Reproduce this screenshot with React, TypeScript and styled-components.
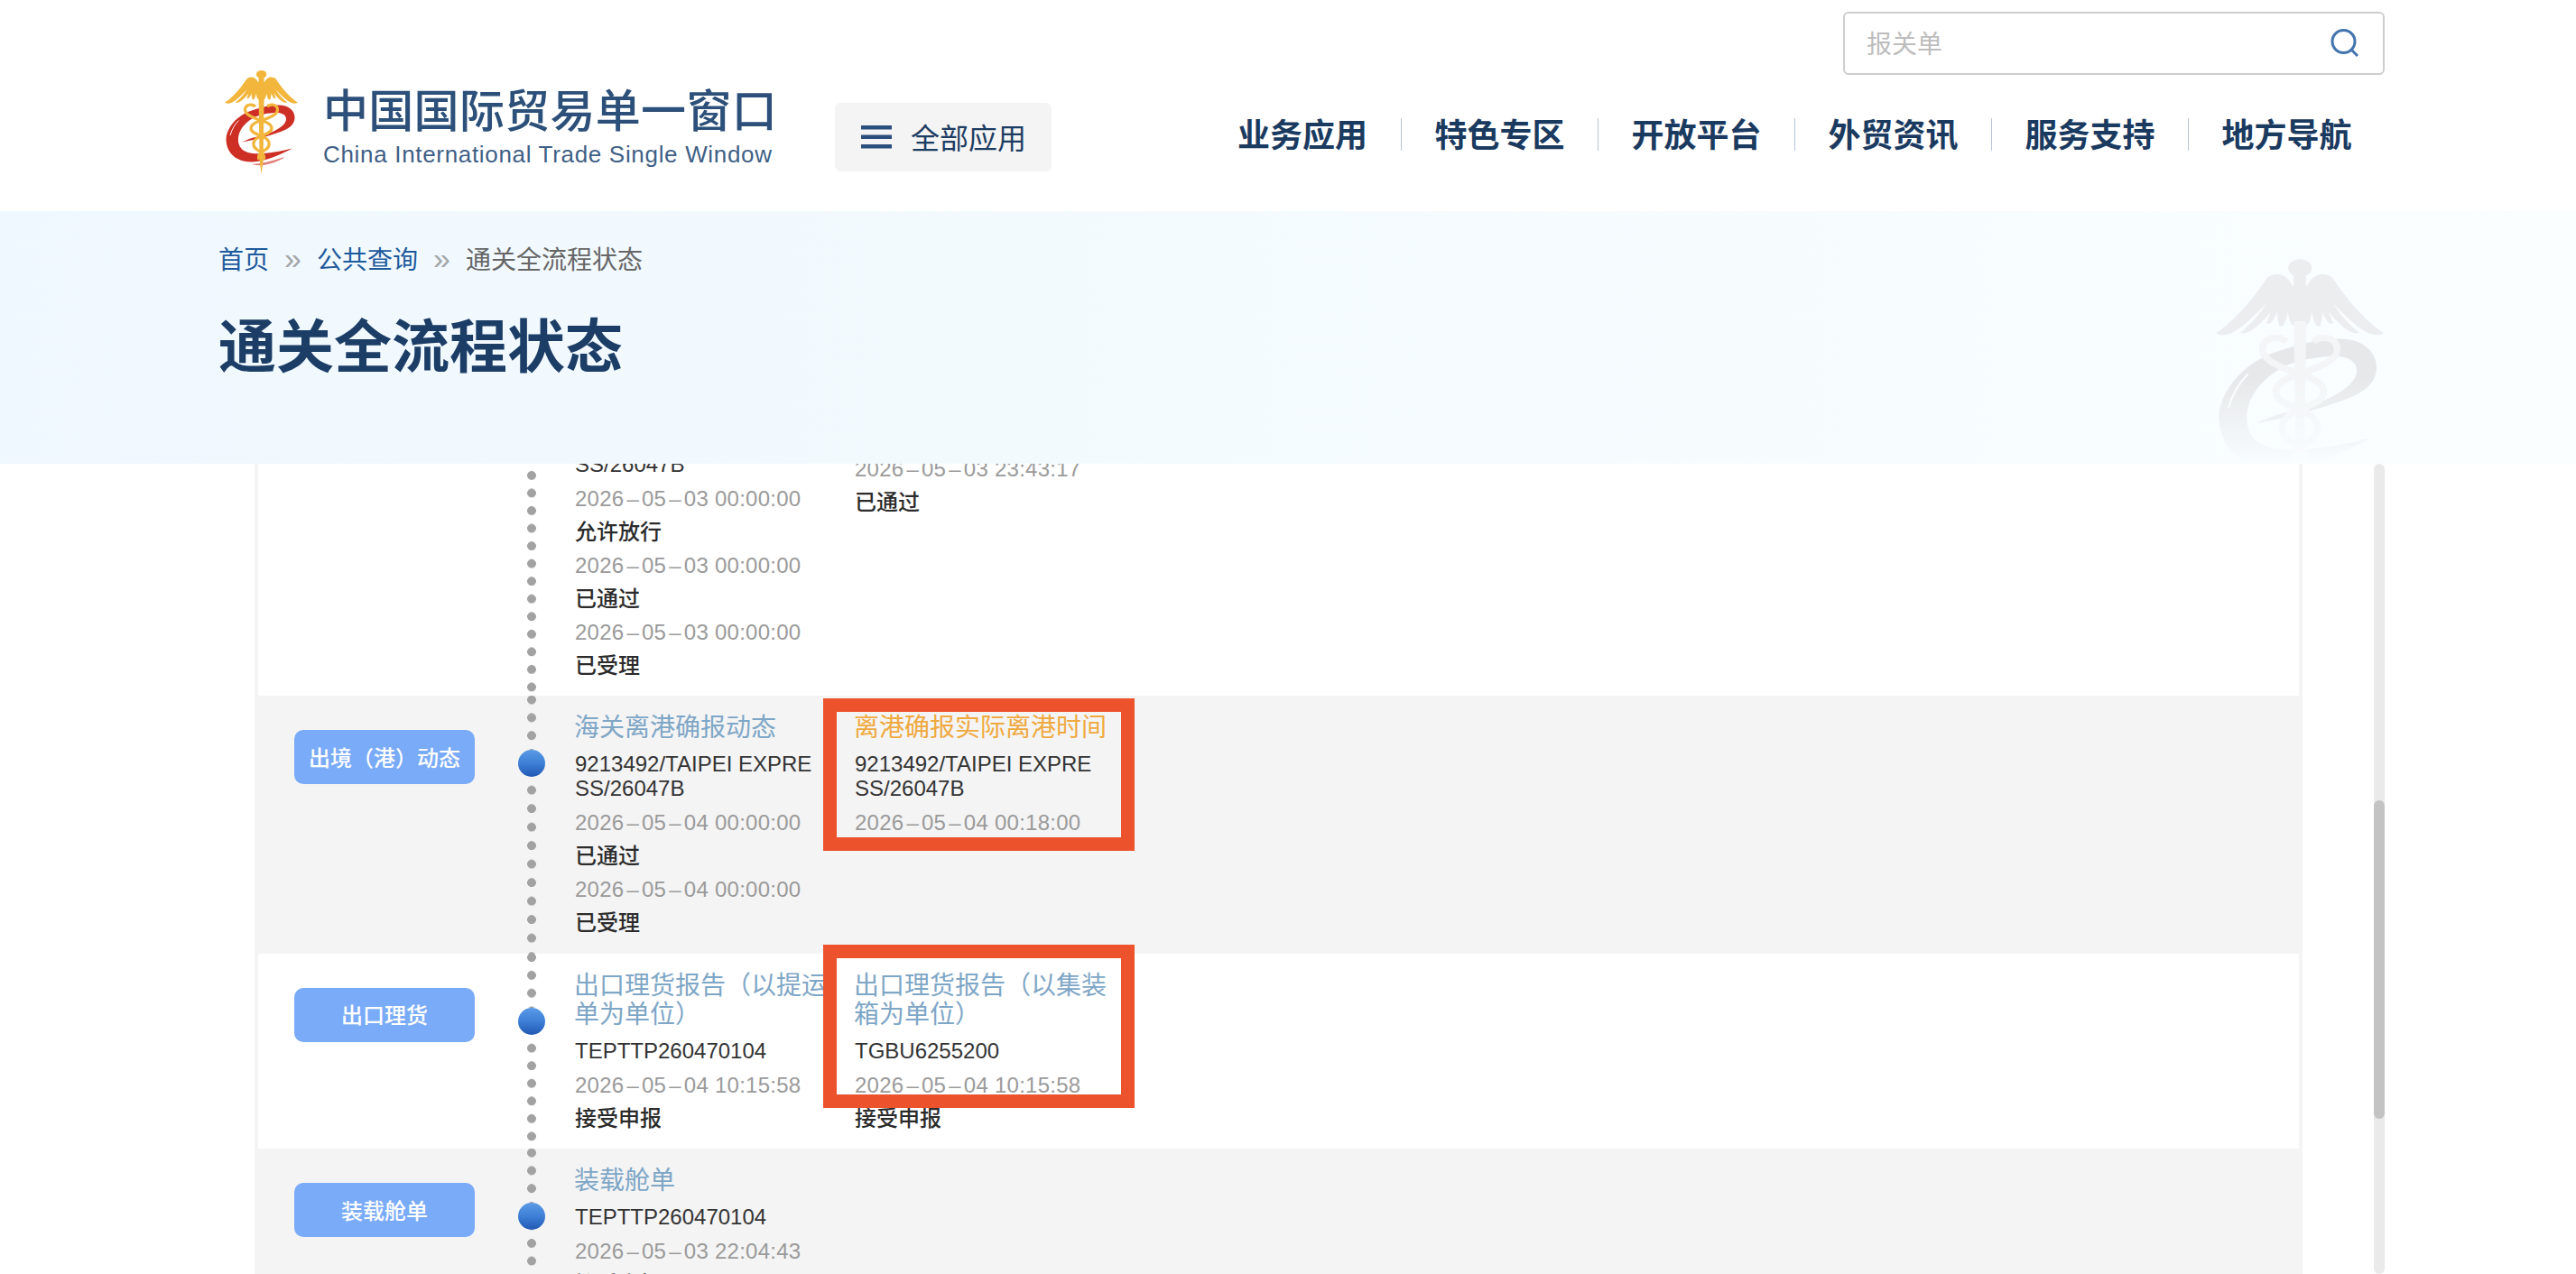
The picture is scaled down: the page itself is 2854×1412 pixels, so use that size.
import React from "react";
import styled, { createGlobalStyle } from "styled-components";

const CJK = `"Noto Sans CJK SC", sans-serif`;
const LATIN = `"Liberation Sans", "Noto Sans CJK SC", sans-serif`;

const Global = createGlobalStyle`
  html, body { margin: 0; padding: 0; background: #fff; overflow: hidden; }
  #root { width: 2854px; height: 1412px; overflow: hidden; }
  * { box-sizing: border-box; }
`;

const Page = styled.div`
  width: 2854px;
  height: 1412px;
  display: flex;
  flex-direction: column;
  font-family: ${LATIN};
`;

const Header = styled.header`
  height: 234px;
  flex: none;
  display: flex;
  align-items: flex-start;
  padding: 0 212px 0 249px;
  background: #fff;
`;

const Brand = styled.div`
  display: flex;
  align-items: flex-start;
  gap: 28px;
  margin-top: 78px;
`;

const BrandMark = styled.div`
  width: 81px;
  flex: none;
`;

const BrandText = styled.div`
  display: flex;
  flex-direction: column;
  margin-top: 10px;
`;

const BrandCn = styled.div`
  font-family: ${CJK};
  font-size: 50px;
  font-weight: 500;
  line-height: 62px;
  letter-spacing: 0.3px;
  color: #2c5079;
  white-space: nowrap;
`;

const BrandEn = styled.div`
  font-family: "Liberation Sans", sans-serif;
  font-size: 26px;
  line-height: 30px;
  margin-top: 6px;
  letter-spacing: 0.68px;
  color: #3f5f86;
  white-space: nowrap;
`;

const AllApps = styled.div`
  width: 240px;
  height: 76px;
  margin: 114px 0 0 64px;
  padding-left: 29px;
  display: flex;
  align-items: center;
  gap: 21px;
  background: #f4f4f4;
  border-radius: 6px;
  font-family: ${CJK};
  font-size: 32px;
  color: #1d3c62;
`;

const AppsLabel = styled.span`
  padding-bottom: 2px;
`;

const HeaderRight = styled.div`
  margin-left: auto;
  display: flex;
  flex-direction: column;
  align-items: flex-end;
`;

const SearchBox = styled.div`
  width: 600px;
  height: 70px;
  margin-top: 13px;
  padding: 0 26px 0 22px;
  display: flex;
  align-items: center;
  border: 2px solid #cdcdcd;
  border-radius: 6px;
  background: #fff;
`;

const SearchInput = styled.input`
  flex: 1;
  min-width: 0;
  border: 0;
  outline: 0;
  padding: 0 0 3px 2px;
  background: transparent;
  font-family: ${CJK};
  font-size: 28px;
  color: #333;
  &::placeholder { color: #bdbdbd; opacity: 1; }
`;

const Nav = styled.nav`
  display: flex;
  margin-top: 48px;
`;

const NavItem = styled.a`
  width: 218px;
  height: 36px;
  padding-bottom: 4px;
  display: flex;
  align-items: center;
  justify-content: center;
  font-family: ${CJK};
  font-size: 36px;
  font-weight: 600;
  color: #1b3a60;
  white-space: nowrap;
  & + & { border-left: 1px solid #b7c4d2; }
`;

const Banner = styled.section`
  height: 280px;
  flex: none;
  display: flex;
  justify-content: space-between;
  align-items: flex-start;
  padding: 0 213px 0 242px;
  overflow: hidden;
  background: linear-gradient(90deg, #eff8fe 0%, #f3fafe 40%, #fafeff 100%);
`;

const BannerText = styled.div`
  display: flex;
  flex-direction: column;
  padding-top: 38px;
`;

const Crumbs = styled.div`
  display: flex;
  align-items: center;
  gap: 17px;
  font-family: ${CJK};
  font-size: 28px;
  line-height: 28px;
`;

const CrumbLink = styled.a`
  color: #1f5a9c;
`;

const CrumbSep = styled.span`
  font-family: "Liberation Sans", sans-serif;
  font-size: 34px;
  color: #a2a6aa;
`;

const CrumbNow = styled.span`
  color: #666;
`;

const Title = styled.h1`
  margin: 47px 0 0;
  font-family: ${CJK};
  font-size: 64px;
  line-height: 64px;
  font-weight: 700;
  color: #1b3d66;
`;

const Watermark = styled.div`
  margin-top: 53px;
  width: 186px;
  flex: none;
  -webkit-mask-image: linear-gradient(180deg, #000 50%, rgba(0, 0, 0, 0) 86%);
  mask-image: linear-gradient(180deg, #000 50%, rgba(0, 0, 0, 0) 86%);
`;

const Body = styled.main`
  flex: 1;
  min-height: 0;
  display: flex;
  align-items: stretch;
  padding-left: 282px;
  overflow: hidden;
`;

const Panel = styled.div`
  position: relative;
  width: 2269px;
  flex: none;
  border-left: 4px solid #f4f4f4;
  border-right: 4px solid #f4f4f4;
  overflow: hidden;
`;

const Row = styled.div<{ $shade?: boolean; $shift?: number }>`
  display: flex;
  align-items: stretch;
  margin-top: ${(p) => p.$shift ?? 0}px;
  background: ${(p) => (p.$shade ? "#f4f4f4" : "#fff")};
`;

const LabelCol = styled.div`
  width: 288px;
  flex: none;
  padding: 38px 0 0 40px;
`;

const Label = styled.div`
  width: 200px;
  height: 60px;
  padding-bottom: 2px;
  display: flex;
  align-items: center;
  justify-content: center;
  border-radius: 10px;
  background: #7aabf8;
  color: #fff;
  font-family: ${CJK};
  font-size: 24px;
  font-weight: 500;
  white-space: nowrap;
`;

const Track = styled.div`
  width: 30px;
  flex: none;
  display: flex;
  flex-direction: column;
  align-items: center;
`;

const Dots = styled.div<{ $grow?: boolean; $step: number; $phase: number }>`
  width: 10px;
  flex: ${(p) => (p.$grow ? "1" : "none")};
  height: ${(p) => (p.$grow ? "auto" : "60px")};
  background-image: radial-gradient(circle at 5px 5px, #a2a2a2 4.6px, transparent 5.2px);
  background-size: 10px ${(p) => p.$step}px;
  background-repeat: repeat-y;
  background-position: 0 ${(p) => p.$phase}px;
`;

const Bullet = styled.div`
  width: 30px;
  height: 30px;
  flex: none;
  border-radius: 50%;
  background: linear-gradient(180deg, #5a9ae6 0%, #3f7fd6 50%, #1f58b4 100%);
`;

const Cols = styled.div`
  display: flex;
  gap: 30px;
  padding: 17px 0 15.5px 33px;
`;

const Col = styled.div<{ $lift?: number }>`
  width: 280px;
  flex: none;
  margin-top: ${(p) => -(p.$lift ?? 0)}px;
`;

const EventTitle = styled.div<{ $accent?: boolean }>`
  margin-left: -1px;
  font-family: ${CJK};
  font-size: 28px;
  line-height: 32px;
  color: ${(p) => (p.$accent ? "#f0a93e" : "#7ea6c6")};
`;

const EventNo = styled.div`
  width: 278px;
  margin: 13px 0 6px;
  font-size: 24px;
  line-height: 27px;
  color: #333;
  word-break: break-all;
`;

const EventDate = styled.div`
  font-size: 24px;
  line-height: 37px;
  letter-spacing: 0.25px;
  color: #9a9a9a;
  white-space: nowrap;
`;

const Dash = styled.span`
  margin: 0 3px;
`;

const EventStatus = styled.div`
  font-family: ${CJK};
  font-size: 24px;
  line-height: 34px;
  padding-bottom: 3px;
  font-weight: 500;
  color: #2b2b2b;
`;

const Callout = styled.div<{ $top: number; $height: number }>`
  position: absolute;
  left: 626px;
  top: ${(p) => p.$top}px;
  width: 345px;
  height: ${(p) => p.$height}px;
  border: 15px solid #ec532d;
  pointer-events: none;
`;

const ScrollTrack = styled.div`
  width: 12px;
  flex: none;
  margin-left: 79px;
  padding-top: 373px;
  border-radius: 6px;
  background: #eaeaea;
`;

const ScrollThumb = styled.div`
  height: 353px;
  border-radius: 6px;
  background: #c3c3c3;
`;

const WING =
  "M37 13C35.5 10 33 7.4 30 7.4C27.5 7.4 25.5 8 24 10C19 18 9 30 0.2 35.6C1.5 37.2 5 37 8 35.5C13 33 18 28 24.5 21.5C21 27 16 32.5 11.8 35.6C14 36.6 18 35 24 28.5L26.5 25.5C26 27 25 29.5 24.4 31C25.6 32 27.6 31 29.5 25.5C29.6 27.5 30 30.5 30.6 32.2C32 33.4 33.4 32 34.8 25.5C35 28 35.6 30.5 37 32L41 33V13Z";

const Emblem = ({ gold, snake, red, slit }: { gold: string; snake: string; red: string; slit: string }) => (
  <svg viewBox="0 0 81 116" width="100%" style={{ display: "block" }}>
    <path
      fill={red}
      d="M60 38.5C71 38.5 78 45 77.5 53C77 61 70 65 62 68C48 73 34 77 19 79.5C30 74 40 73 48 70C59 66 68 60 68 54C68 49 63 47 58 47C48 47 38 49 31 53C21 59 14 68 15 79C16 87 22 91 31 92C44 93 60 90 75 86.5C62 93 46 101 30 101.5C13 101.5 2 92 1.5 77C1 66 12 50 30 44.5C42 40.5 50 38.5 60 38.5Z"
    />
    <path fill="none" stroke={slit} strokeWidth="0.9" d="M6 72C8 65 11 60 15.5 55.5" />
    <path fill={red} opacity="0.6" d="M30 104C42 103 54 100 66 96L64 98C52 104 40 107 30 104Z" />
    <path fill={gold} d={WING} />
    <path fill={gold} d={WING} transform="translate(81 0) scale(-1 1)" />
    <ellipse cx="40.6" cy="4.4" rx="5.7" ry="4.3" fill={gold} />
    <rect x="37.5" y="7" width="6" height="8" fill={gold} />
    <path fill={snake} d="M37.6 30H43.6L42.6 100L40.6 115L38.6 100Z" />
    <g fill="none" stroke={snake} strokeWidth="3.2">
      <path d="M34 40C30 36.5 23 38 22.5 43C22 48 28 51 36 54C45 57 52 59 52 64C52 70 42 71 36 75C30 79 31 85 36 88C41 91 45 94 43 99" />
      <path d="M47 40C51 36.5 58 38 58.5 43C59 48 53 51 45 54C36 57 29 59 29 64C29 70 39 71 45 75C51 79 50 85 45 88C40 91 36 94 38 99" />
    </g>
  </svg>
);

const Hamburger = () => (
  <svg width="34" height="26" viewBox="0 0 34 26" style={{ flex: "none" }}>
    <rect x="0" y="0" width="34" height="4.5" fill="#2a4f7c" />
    <rect x="0" y="10.5" width="34" height="4.5" fill="#2a4f7c" />
    <rect x="0" y="21" width="34" height="4.5" fill="#2a4f7c" />
  </svg>
);

const SearchGlyph = () => (
  <svg width="32" height="32" viewBox="0 0 32 32" style={{ flex: "none" }}>
    <circle cx="14.5" cy="14" r="12.5" fill="none" stroke="#4274ad" strokeWidth="3" />
    <path d="M23.5 23.5L30 30" stroke="#4274ad" strokeWidth="3" fill="none" />
  </svg>
);

const Stamp = ({ value }: { value: string }) => {
  const [date, time] = value.split(" ");
  const [y, m, d] = date.split("-");
  return (
    <EventDate>
      {y}
      <Dash>–</Dash>
      {m}
      <Dash>–</Dash>
      {d} {time}
    </EventDate>
  );
};

type Step = [string, string];
type Event = { title?: string; accent?: boolean; no?: string; steps: Step[]; lift?: number };
type Stage = {
  label: string;
  shade: boolean;
  shift?: number;
  topPhase: number;
  bottomPhase: number;
  bottomStep: number;
  events: Event[];
};

const VESSEL = "9213492/TAIPEI EXPRESS/26047B";

const STAGES: Stage[] = [
  {
    label: "海关放行",
    shade: false,
    shift: -102.5,
    topPhase: -0.4,
    bottomPhase: 0.4,
    bottomStep: 19.55,
    events: [
      {
        title: "海关放行动态",
        no: VESSEL,
        steps: [
          ["2026-05-03 00:00:00", "允许放行"],
          ["2026-05-03 00:00:00", "已通过"],
          ["2026-05-03 00:00:00", "已受理"],
        ],
      },
      { title: "海关放行时间", no: "TEPTTP260470104", lift: 6, steps: [["2026-05-03 23:43:17", "已通过"]] },
    ],
  },
  {
    label: "出境（港）动态",
    shade: true,
    topPhase: -0.4,
    bottomPhase: 9.7,
    bottomStep: 20.5,
    events: [
      {
        title: "海关离港确报动态",
        no: VESSEL,
        steps: [
          ["2026-05-04 00:00:00", "已通过"],
          ["2026-05-04 00:00:00", "已受理"],
        ],
      },
      { title: "离港确报实际离港时间", accent: true, no: VESSEL, steps: [["2026-05-04 00:18:00", ""]] },
    ],
  },
  {
    label: "出口理货",
    shade: false,
    topPhase: -0.9,
    bottomPhase: 9.7,
    bottomStep: 19.55,
    events: [
      {
        title: "出口理货报告（以提运单为单位）",
        no: "TEPTTP260470104",
        steps: [["2026-05-04 10:15:58", "接受申报"]],
      },
      {
        title: "出口理货报告（以集装箱为单位）",
        no: "TGBU6255200",
        steps: [["2026-05-04 10:15:58", "接受申报"]],
      },
    ],
  },
  {
    label: "装载舱单",
    shade: true,
    topPhase: -0.4,
    bottomPhase: 10,
    bottomStep: 19.55,
    events: [
      {
        title: "装载舱单",
        no: "TEPTTP260470104",
        steps: [["2026-05-03 22:04:43", "接受申报"]],
      },
    ],
  },
];

export default function App() {
  return (
    <Page>
      <Global />
      <Header>
        <Brand>
          <BrandMark>
            <Emblem gold="#f2b63c" snake="#f2b63c" red="#cd2f25" slit="#ffffff" />
          </BrandMark>
          <BrandText>
            <BrandCn>中国国际贸易单一窗口</BrandCn>
            <BrandEn>China International Trade Single Window</BrandEn>
          </BrandText>
        </Brand>
        <AllApps>
          <Hamburger />
          <AppsLabel>全部应用</AppsLabel>
        </AllApps>
        <HeaderRight>
          <SearchBox>
            <SearchInput placeholder="报关单" readOnly />
            <SearchGlyph />
          </SearchBox>
          <Nav>
            {["业务应用", "特色专区", "开放平台", "外贸资讯", "服务支持", "地方导航"].map((n) => (
              <NavItem key={n}>{n}</NavItem>
            ))}
          </Nav>
        </HeaderRight>
      </Header>

      <Banner>
        <BannerText>
          <Crumbs>
            <CrumbLink>首页</CrumbLink>
            <CrumbSep>»</CrumbSep>
            <CrumbLink>公共查询</CrumbLink>
            <CrumbSep>»</CrumbSep>
            <CrumbNow>通关全流程状态</CrumbNow>
          </Crumbs>
          <Title>通关全流程状态</Title>
        </BannerText>
        <Watermark>
          <Emblem gold="#ecedee" snake="#f3f5f6" red="#e6e8e9" slit="#f9fdff" />
        </Watermark>
      </Banner>

      <Body>
        <Panel>
          {STAGES.map((s) => (
            <Row key={s.label} $shade={s.shade} $shift={s.shift}>
              <LabelCol>
                <Label>{s.label}</Label>
              </LabelCol>
              <Track>
                <Dots $step={19.8} $phase={s.topPhase} />
                <Bullet />
                <Dots $grow $step={s.bottomStep} $phase={s.bottomPhase} />
              </Track>
              <Cols>
                {s.events.map((e) => (
                  <Col key={e.title} $lift={e.lift}>
                    <EventTitle $accent={e.accent}>{e.title}</EventTitle>
                    <EventNo>{e.no}</EventNo>
                    {e.steps.map(([date, status], i) => (
                      <React.Fragment key={i}>
                        <Stamp value={date} />
                        {status && <EventStatus>{status}</EventStatus>}
                      </React.Fragment>
                    ))}
                  </Col>
                ))}
              </Cols>
            </Row>
          ))}
          <Callout $top={260} $height={169} />
          <Callout $top={533} $height={181} />
        </Panel>
        <ScrollTrack>
          <ScrollThumb />
        </ScrollTrack>
      </Body>
    </Page>
  );
}
